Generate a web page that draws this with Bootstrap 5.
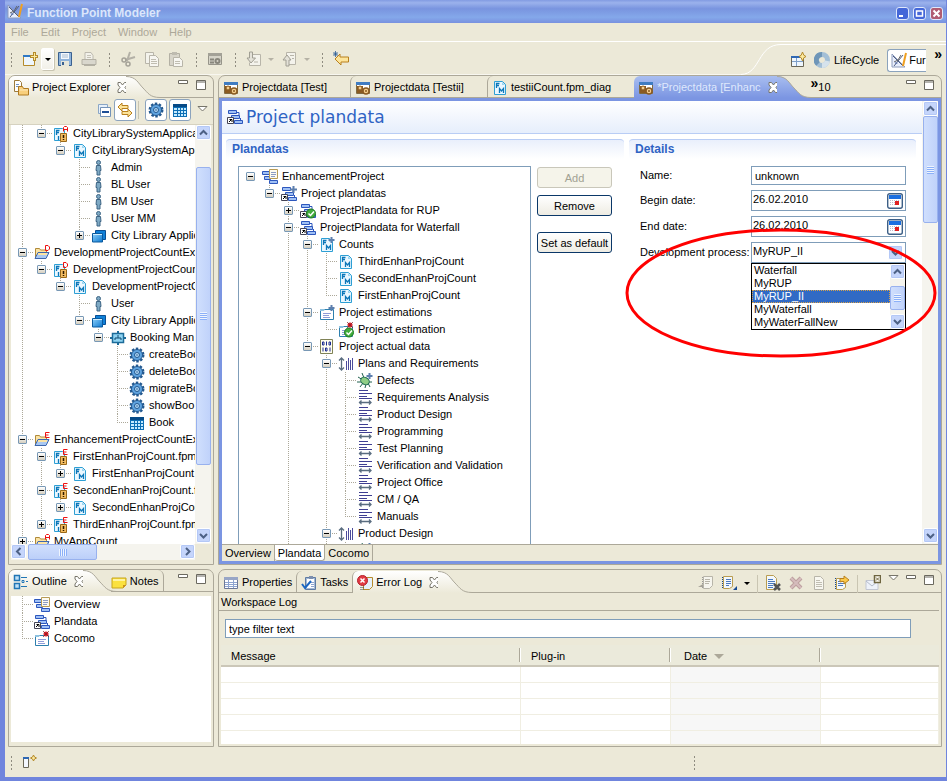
<!DOCTYPE html>
<html lang="en">
<head>
<meta charset="utf-8">
<meta name="viewport" content="width=device-width, initial-scale=1">
<title>Function Point Modeler</title>
<link href="https://cdn.jsdelivr.net/npm/bootstrap@5.3.0/dist/css/bootstrap.min.css" rel="stylesheet">
<style>
:root{--face:#ece9d8;--line:#aca899;--blue:#7b95e2;--field:#7f9db9}
body{font:11px/17px "Liberation Sans",Arial,sans-serif;color:#000;background:var(--face)}
button,input,select{font:inherit;color:inherit}
button{border:0;background:none;padding:0;line-height:17px}
ul{list-style:none;margin:0;padding:0}
svg{display:block;flex:none}
.ic{width:16px;height:16px;overflow:visible}
.shell{height:100vh;border:solid #7085dd;border-width:0 1px 4px 5px;white-space:nowrap}
.titlebar{height:23px;padding:3px 3px 0 2px;background:linear-gradient(#829be2,#9bb2ec 12%,#7994df 38%,#84a8ea 75%,#7991df);color:#dbe6fb;font:bold 12px/21px "Liberation Sans",sans-serif}
.winbtn{width:13px;height:13px;border:1px solid #dfe8fc;border-radius:3px;background:#4467d8}
.winbtn.shut{background:#b05c72}
.menus{height:19px;padding:1px 6px 0;border-bottom:1px solid #fff}
.menus a{color:#aca899;text-decoration:none}
.tools{height:33px}
.strip{gap:8px;padding:2px 0 0 2px}
.grip{width:3px;height:15px;margin:0 1px 0 3px;background:radial-gradient(circle,#8f8c80 1px,transparent 1px) 0 0/3px 4px}
.tri{width:6px;height:16px;margin-left:-2px}
.newgrp{gap:3px;margin-right:-5px}
.newdd{width:13px;height:22px;border:1px solid #fff;border-radius:2px;background:linear-gradient(#fff,#f2f0e8);box-shadow:1px 1px #c9c5b2}
.persp{border-top:1px solid #fff;margin-top:2px;padding:0 4px 0 9px;gap:4px;flex:none}
.persp-on{width:39px;height:23px;border:1px solid #8ba3bd;border-right:0;border-radius:3px 0 0 3px;background:#fff;padding-left:3px;gap:2px}
.rule{border-bottom:1px solid #f8f7f0}
.work{gap:4px;padding:0 4px 0 3px;min-height:0}
.side{flex:0 0 206px;gap:4px;min-height:0;min-width:0}
.main-col{flex:1 1 0;min-width:0}
.pane{border:1px solid var(--line);border-radius:7px 7px 0 0;min-height:0}
.fixedpane{flex:0 0 178px}
.logpane{padding-top:1px}
.tabs{height:22px;flex:none}
.tabs>li{border-bottom:1px solid var(--line);flex:none}
.tabs .on{border-bottom:0;background:linear-gradient(#fff,var(--face));border-radius:6px 0 0 0}
.tabs button{height:21px;display:flex;align-items:center;gap:3px;padding:2px 4px 0}
.tabs .on button{padding-right:0}
.tabs .div{border-left:1px solid var(--line);border-radius:6px 0 0 0}
.tabs .divr{border-right:1px solid var(--line);border-radius:0 6px 0 0;margin-left:-6px}
.ed .on{background:linear-gradient(#a9bef0,var(--blue));color:#dfe8fc}
.ed .doc button{padding-right:23px}
.tabs .curve{width:34px;height:22px;border:0;margin-left:-2px}
.tabs .ctl{gap:7px;padding:4px 6px 0 0;flex:1 1 0}
.more{font-size:14px;line-height:10px}
.viewtools{height:27px;flex:none;gap:2px;padding:0 5px 2px 0;border-bottom:1px solid #d6d2c0}
.tog{width:22px;height:22px;border:1px solid #8ba3bd;border-radius:3px;background:#fff;padding:2px}
.vsep{width:1px;height:18px;background:#c9c5b2}
.white{background:#fff;min-height:0;min-width:0;overflow:hidden}
.inset{margin:0 2px}
/* tree */
.pad7{padding-left:7px}
.tree ul{padding-left:19px}
.tree li{background:repeating-linear-gradient(#aca899 0 1px,transparent 1px 2px) 4px 0/1px 100% no-repeat}
.tree li:last-child{background-size:1px 9px}
.tree.more-below>li:last-child{background-size:1px 100%}
.tree.single>li{background:none}
.tn{height:17px;display:flex;align-items:center;background:repeating-linear-gradient(90deg,#aca899 0 1px,transparent 1px 2px) 6px 8px/9px 1px no-repeat}
.tree.single>li>.tn{background:none}
.tn .ic{margin-right:4px}
.leaf{padding-left:16px}
.tw{width:9px;height:9px;flex:none;margin-right:7px;border:1px solid #7898b5;border-radius:1px;background:linear-gradient(#000,#000) 1px 3px/5px 1px no-repeat,linear-gradient(#fff,#d5cfc0)}
.tw.plus{background:linear-gradient(#000,#000) 1px 3px/5px 1px no-repeat,linear-gradient(#000,#000) 3px 1px/1px 5px no-repeat,linear-gradient(#fff,#d5cfc0)}
/* scroll bars */
.vbar{width:16px;flex:none;background:#f5f4ee;display:flex;flex-direction:column;align-items:stretch;padding:0 0 1px 1px}
.hbar{height:16px;flex:none;background:#f5f4ee;display:flex}
.hcorner{width:16px}
.sb{width:15px;height:15px;flex:none;border:1px solid #fff;border-radius:2px;background:#c5d5fb;box-shadow:0 0 0 1px #b4c8f6 inset;display:flex;align-items:center;justify-content:center}
.vbar .sb{width:auto}
.thumb{border:1px solid #98b1ee;border-radius:2px;background:linear-gradient(90deg,#d0dffd,#c0d2fa);display:flex;align-items:center;justify-content:center}
.hbar .thumb{background:linear-gradient(#d0dffd,#bccff9)}
.thumb i{width:7px;height:8px;background:repeating-linear-gradient(#eef4fe 0 1px,#8cb0f8 1px 2px)}
.hbar .thumb i{width:8px;height:7px;background:repeating-linear-gradient(90deg,#eef4fe 0 1px,#8cb0f8 1px 2px)}
.th-side{margin-top:27px;flex:0 0 298px}
.th-ed{flex:0 0 107px}
.th-h{width:69px;margin-left:2px}
.th-pop{flex:0 0 24px;margin-top:7px}
/* editor */
.frame{border:3px solid var(--blue);min-height:0}
.fhead{height:33px;flex:none;padding:0 5px;background:linear-gradient(#fff,#e6eefc);border-bottom:1px solid #b9cdf5;gap:3px;color:#2f63c4;font:17px/30px "DejaVu Sans",sans-serif}
.secs{padding:5px 6px 0 4px;gap:5px}
.sec-a{flex:398 1 0;min-width:0}
.sec-b{flex:287 1 0;min-width:0}
.stitle{height:20px;margin:0 0 7px;padding:0 6px;border-top:1px solid #b9cdf5;border-radius:4px 4px 0 0;background:linear-gradient(#e9effc,#fff);color:#2f63c4;font:bold 12px/19px "Liberation Sans",sans-serif}
.box{border:1px solid var(--field);border-bottom:0;padding:1px 7px}
.acts{width:75px;flex:none;margin:1px 0 0 6px}
.xpbtn{display:block;width:100%;height:21px;border:1px solid #0a3768;border-radius:3px;background:linear-gradient(#fff,#eeece3);margin-bottom:7px;line-height:18px}
.xpbtn:disabled{border-color:#c9c7ba;background:#f5f4ea;color:#a1a192}
.frow{margin-bottom:5px;padding:0 10px 0 11px}
.frow label{flex:0 0 111px}
.fld{flex:1 1 0;min-width:0;border:1px solid var(--field);background:#fff;height:21px;padding:0 2px 0 1px}
.fld input,.fld select,input.fld{border-radius:0;outline:0}
.fld input,.fld select{border:0;min-width:0;flex:1;padding:0 0 3px;appearance:none;background:#fff;height:19px}
input.fld{height:19px;padding:0 3px}
.pop{left:-1px;right:-1px;top:20px;border:1px solid #000;background:#fff;z-index:3;height:67px}
.pop li{height:13px;line-height:13px;padding-left:2px}
.pop .sel{background:#316ac5;color:#fff;outline:1px dotted #d8a24a;outline-offset:-1px}
.pop .vbar{width:15px;padding:0}
.ring{right:1px;top:126px;width:312px;height:132px;z-index:5;pointer-events:none}
.ptabs{height:17px;flex:none;background:var(--face);border-top:1px solid var(--line)}
.ptabs button{padding:0 3px;height:16px;border-right:1px solid var(--line);line-height:16px}
.ptabs .cur{background:#fff;border:solid var(--line);border-width:0 1px 1px 0;border-radius:0 0 3px 3px}
/* log */
.wslog{border-bottom:1px solid var(--line);margin-right:2px;padding:1px 0 0 2px;height:18px}
.filter{flex:none;margin:8px 30px 0 6px}
.log{margin:7px 2px 2px 2px}
.logt{width:100%;table-layout:fixed;border-collapse:separate;border-spacing:0}
.logt th{font-weight:400;height:22px;padding:2px 0 0 10px;background:linear-gradient(90deg,var(--line) 1px,#fff 1px) right 3px/2px 14px no-repeat #ebeadb;background-position:right 3px;border-bottom:2px solid #cbc7b8}
.logt th:last-child{background-image:none}
.logt th:nth-child(3){padding-left:13px}
.logt td{height:16px;padding:0;border-bottom:1px solid #f0eee2;border-right:1px solid #f0eee2;background:#fff}
.logt td:nth-child(3){background:#f7f7f7}
.w300{width:300px}
.w150{width:150px}
.status{height:30px;padding-left:2px}
.status .far{margin-left:647px}
</style>
</head>
<body>
<svg width="0" height="0" class="position-absolute" aria-hidden="true">
<defs>
<linearGradient id="gw" x2="0" y2="1"><stop stop-color="#fff"/><stop offset="1" stop-color="#ece9d8"/></linearGradient>
<linearGradient id="gb" x2="0" y2="1"><stop stop-color="#a9bef0"/><stop offset="1" stop-color="#7b95e2"/></linearGradient>
<linearGradient id="gp" x2="1" y2="1"><stop stop-color="#8fd0fa"/><stop offset="1" stop-color="#0a78d0"/></linearGradient>
<symbol id="app" viewBox="0 0 16 16"><path d="M1 2V15H14Z" fill="#e8eefc" stroke="#8d9cbd"/><path d="M4 9v3h3z" fill="#8fa6dd"/><path d="M2 4l10 10M3 14L12 3" stroke="#4f5d80"/><path d="M15 1l-3 13" stroke="#f0a020" stroke-width="2"/><path d="M3 10l4-2 3-5" stroke="#666" fill="none"/></symbol>
<symbol id="new" viewBox="0 0 16 16"><path d="M1.500 4.500h11v10h-11z" fill="#eef6fd" stroke="#b58a2a"/><path d="M1 4h9v2H1z" fill="#2f78c4"/><path d="M12.500 1v9M8 5.500h8" stroke="#b58a2a" stroke-width="3"/><path d="M12.500 2v7M9 5.500h6" stroke="#fbe9a0"/></symbol>
<symbol id="save" viewBox="0 0 16 16"><path d="M1.500 1.500h13v13h-13z" fill="#8fb3da" stroke="#3a6190"/><path d="M4 2h8v6H4z" fill="#f4f8fc"/><path d="M5 4h6M5 6h6" stroke="#a8bdd2"/><path d="M4 10h8v5H4z" fill="#e6e6da"/><path d="M5 11h2v3H5z" fill="#3a6190"/></symbol>
<symbol id="print" viewBox="0 0 16 16"><path d="M4 1.500h6l2 3v5H4z" fill="#f2f1ea" stroke="#bcb9ae"/><path d="M1 8.500h14v5H1z" fill="#d9d7cd" stroke="#b3b0a4"/><path d="M3 14.500h11" stroke="#b3b0a4"/><path d="M6 4.500h4M6 6.500h4" stroke="#c5c2b6"/></symbol>
<symbol id="cut" viewBox="0 0 16 16"><path d="M10 1L7 10M15 6L5 9" stroke="#b3b0a6" stroke-width="2"/><circle cx="4" cy="9" r="2" fill="none" stroke="#a5a298" stroke-width="1.500"/><circle cx="8" cy="13" r="2" fill="none" stroke="#a5a298" stroke-width="1.500"/></symbol>
<symbol id="copy" viewBox="0 0 16 16"><path d="M1.500 1.500h8v11h-8z" fill="#f4f3ec" stroke="#b8b5a9"/><path d="M5.500 4.500h6l3 3v8h-9z" fill="#f7f6f1" stroke="#b8b5a9"/><path d="M7 8.500h5M7 10.500h6M7 12.500h6" stroke="#c0bdb1"/></symbol>
<symbol id="paste" viewBox="0 0 16 16"><path d="M1.500 2.500h10v12h-10z" fill="#d8d5ca" stroke="#b3b0a4"/><path d="M4 1h5v3H4z" fill="#bebbb0"/><path d="M5.500 6.500h6l3 3v6h-9z" fill="#f7f6f1" stroke="#b8b5a9"/><path d="M7 10.500h5M7 12.500h5" stroke="#c0bdb1"/></symbol>
<symbol id="pd" viewBox="0 0 16 16"><path d="M1.500 2.500h13v11h-13z" fill="#fff" stroke="#7f6b42"/><path d="M1 2h14v3H1z" fill="#3f7cc2"/><path d="M2 6h6v7H2z" fill="#8a5a22"/><circle cx="5" cy="8" r="2" fill="#f5cf8d" stroke="#8a5a22"/><circle cx="11" cy="11" r="3" fill="#f5cf8d" stroke="#8a5a22" stroke-width="1.500"/><circle cx="11" cy="11" r="1" fill="#8a5a22"/></symbol>
<symbol id="pdg" viewBox="0 0 16 16"><path d="M1.500 2.500h13v11h-13z" fill="#d5d3c8" stroke="#97958a"/><path d="M1 2h14v3H1z" fill="#a3a197"/><path d="M3 8.500h4M3 11.500h4" stroke="#88867c" stroke-width="2"/><circle cx="10.500" cy="10" r="2" fill="none" stroke="#88867c" stroke-width="2"/></symbol>
<symbol id="imp" viewBox="0 0 16 16"><path d="M6.500 3.500h8v11h-11v-3" fill="#f4f3ec" stroke="#b8b5a9"/><path d="M3.500 1h3v6h3l-4.500 5L1 7h2.500z" fill="#e4e2d8" stroke="#a09e93"/><path d="M8 11h4" stroke="#b8b5a9"/></symbol>
<symbol id="exp" viewBox="0 0 16 16"><path d="M4.500 1.500h9v12h-9z" fill="#f4f3ec" stroke="#b8b5a9"/><path d="M4 15V9H1l4-5 4 5H7v6z" fill="#e4e2d8" stroke="#a09e93"/><path d="M8 4.500h4M10 7.500h2" stroke="#b8b5a9"/></symbol>
<symbol id="back" viewBox="0 0 16 16"><path d="M2 8l5-5v3h8.500v5H8v3z" fill="#fde49a" stroke="#b8801e"/><path d="M2.500 0v6M0 3h5M.5 1l4 4M4.500 1l-4 4" stroke="#2b5a95" stroke-width=".8"/></symbol>
<symbol id="opp" viewBox="0 0 16 16"><path d="M1.500 4.500h12v10h-12z" fill="#eef6fd" stroke="#6b6757"/><path d="M1 4h9v2H1z" fill="#2f68b4"/><path d="M6.500 6v8M2 9.500h11" stroke="#7e9fc8"/><path d="M12.500 0l1.300 3.200L16 4.500l-2.200 1.300L12.500 9l-1.300-3.200L9 4.500l2.200-1.300z" fill="#fbe9a0" stroke="#b58a2a"/></symbol>
<symbol id="life" viewBox="0 0 16 16"><circle cx="8" cy="8" r="5.500" fill="none" stroke="#a3bfd6" stroke-width="5"/><path d="M8 2.500A5.500 5.500 0 0 0 4 12" fill="none" stroke="#6f96b8" stroke-width="5"/><path d="M8 13.500A5.500 5.500 0 0 0 13.500 9" fill="none" stroke="#d5e2ec" stroke-width="5"/></symbol>
<symbol id="pex" viewBox="0 0 16 16"><path d="M1.500.5h5l2 2v9h-7z" fill="#fff" stroke="#9d7a3a"/><path d="M3 4.500h3M3 6.500h3" stroke="#6f93c4"/><path d="M5.500 15V6.500h4l1 2h5V15z" fill="#f8cf7c" stroke="#b07a20"/><path d="M7 10h8" stroke="#fdeabb"/></symbol>
<symbol id="coll" viewBox="0 0 16 16"><path d="M2.500 2.500h9v9h-9z" fill="#e7f0fa" stroke="#8aa6c6"/><path d="M4.500 5.500h10v9h-10z" fill="#fff" stroke="#7392b8"/><path d="M6 10h7" stroke="#1f4f96" stroke-width="2"/></symbol>
<symbol id="link" viewBox="0 0 16 16"><path d="M1 5l4-4v2.500h6v3H5V9z" fill="#fde49a" stroke="#b8801e"/><path d="M15 11l-4-4v2.500H5v3h6V15z" fill="#fde49a" stroke="#b8801e"/></symbol>
<symbol id="gear" viewBox="0 0 16 16"><circle cx="8" cy="8" r="6.200" fill="none" stroke="#22588f" stroke-width="2.500" stroke-dasharray="2.400 1.500"/><circle cx="8" cy="8" r="5.500" fill="#5fa3df" stroke="#22588f"/><circle cx="8" cy="8" r="2.500" fill="#b5dbf8" stroke="#22588f"/><circle cx="8" cy="8" r=".8" fill="#22588f"/></symbol>
<symbol id="grid" viewBox="0 0 16 16"><path d="M1 2h14v13H1z" fill="#0d6fb5"/><path d="M1 2h14v3H1z" fill="#064a86"/><path d="M2 6h3v2H2zM6 6h2v2H6zM9 6h2v2H9zM12 6h2v2h-2zM2 9h3v2H2zM6 9h2v2H6zM9 9h2v2H9zM12 9h2v2h-2zM2 12h3v2H2zM6 12h2v2H6zM9 12h2v2H9zM12 12h2v2h-2z" fill="#c5ebff"/></symbol>
<symbol id="fm" viewBox="0 0 16 16"><path d="M2.500 1.500h8l3 3v10h-11z" fill="#eaf7ff" stroke="#2d9fd4"/><path d="M10 2v3h3" fill="#9bd6f2"/><path d="M4.500 8V3.500h3M4.500 5.500h2.500M7.500 13V8.500l2 2.500 2-2.500V13" fill="none" stroke="#0b76b8" stroke-width="1.300"/></symbol>
<symbol id="fml" viewBox="0 0 16 16"><path d="M1.500 2.500h8l2 2v10h-10z" fill="#eaf7ff" stroke="#2d9fd4"/><path d="M3.500 9V4.500h3M3.500 6.500h2.500M5.500 14V10" fill="none" stroke="#0b76b8" stroke-width="1.300"/><path d="M7.500 7.500h6v8h-6z" fill="#f3bd63" stroke="#9a6a1a"/><path d="M10.500 9v3M10.500 13v1" stroke="#2b1a00" stroke-width="1.500"/></symbol>
<symbol id="lA" viewBox="0 0 5 6"><path d="M.5 5.500v-4l1-1h2l1 1v4M.5 3.500h4" fill="none" stroke="#e11"/></symbol>
<symbol id="lD" viewBox="0 0 5 6"><path d="M.5.500h2.500l1.500 1.500v2L3 5.500H.5z" fill="none" stroke="#e11"/></symbol>
<symbol id="lE" viewBox="0 0 5 6"><path d="M4.500.5h-4v5h4M.5 3h3" fill="none" stroke="#e11"/></symbol>
<symbol id="fmA" viewBox="0 0 16 16"><use href="#fml" width="16" height="16"/><use href="#lA" x="10" width="5" height="6"/></symbol>
<symbol id="fmD" viewBox="0 0 16 16"><use href="#fml" width="16" height="16"/><use href="#lD" x="10" width="5" height="6"/></symbol>
<symbol id="fmE" viewBox="0 0 16 16"><use href="#fml" width="16" height="16"/><use href="#lE" x="10" width="5" height="6"/></symbol>
<symbol id="fold" viewBox="0 0 16 16"><path d="M1.500 13V3.500h4l1 1.500h6v3" fill="#fbe3a4" stroke="#b08a3a"/><path d="M1 13.500l3-6h11l-3 6z" fill="#a9c8f2" stroke="#3e67ad"/><path d="M4 9h9" stroke="#fbe3a4" stroke-width="2"/></symbol>
<symbol id="foD" viewBox="0 0 16 16"><use href="#fold" width="16" height="16"/><use href="#lD" x="11" width="5" height="6"/></symbol>
<symbol id="foE" viewBox="0 0 16 16"><use href="#fold" width="16" height="16"/><use href="#lE" x="11" width="5" height="6"/></symbol>
<symbol id="foA" viewBox="0 0 16 16"><use href="#fold" width="16" height="16"/><use href="#lA" x="11" width="5" height="6"/></symbol>
<symbol id="man" viewBox="0 0 16 16"><circle cx="7.500" cy="2.500" r="2" fill="#7ea9c4" stroke="#3c6484"/><path d="M5.500 5.500h4l.5 5H9V15H6v-4.500H5z" fill="#7ea9c4" stroke="#3c6484"/></symbol>
<symbol id="pkg" viewBox="0 0 16 16"><path d="M4.500 2.500h10v9h-10z" fill="#0f80d8" stroke="#0a4f93"/><path d="M1.500 5.500h10v8.500h-10z" fill="url(#gp)" stroke="#0a5a9f"/><path d="M2 6.500h9" stroke="#cfeeff"/></symbol>
<symbol id="node" viewBox="0 0 16 16"><path d="M8 1v14M0 8h16" stroke="#1d6b99" stroke-width="2"/><path d="M2.500 3.500h11v9h-11z" fill="#8fd4f3" stroke="#1d6b99" stroke-width="1.500"/><path d="M8 5v3M5 10V8h6v2" fill="none" stroke="#114b70"/></symbol>
<symbol id="bars" viewBox="0 0 16 16"><path d="M1.500 1.500h8v3h-8zM4.500 6.500h8v3h-8zM7.500 11.500h8v3h-8z" fill="#9fc0f5" stroke="#2d57bd"/><path d="M10 3.500h2v3M13.500 9v2" stroke="#2d57bd" fill="none"/></symbol>
<symbol id="plan" viewBox="0 0 16 16"><use href="#bars" width="16" height="16"/><path d="M.5 8.500h6v6h-6z" fill="#fff" stroke="#445"/><path d="M2 13L5 10M2.500 10.500H5V13" stroke="#000" fill="none"/></symbol>
<symbol id="planp" viewBox="0 0 16 16"><use href="#plan" width="16" height="16"/><path d="M12.500 0v7M9 3.500h7" stroke="#5d7fae" stroke-width="2"/></symbol>
<symbol id="ok" viewBox="0 0 16 16"><circle cx="11" cy="10.500" r="4.500" fill="#43ad3d" stroke="#1d7a22"/><path d="M8.500 10.500l2 2 3.500-4" stroke="#fff" stroke-width="1.500" fill="none"/></symbol>
<symbol id="planok" viewBox="0 0 16 16"><use href="#plan" width="16" height="16"/><use href="#ok" width="16" height="16"/></symbol>
<symbol id="over" viewBox="0 0 16 16"><path d="M.5 2.500h7v3h-7zM2.500 7.500h6v3h-6zM7.500 11.500h8v3h-8z" fill="#9fc0f5" stroke="#2d57bd"/><path d="M7.500.5h8v9h-8z" fill="#fdfaf0" stroke="#b79b55"/><path d="M9 3.500h5M9 5.500h5M9 7.500h4" stroke="#8b9cc4"/></symbol>
<symbol id="fmp" viewBox="0 0 16 16"><use href="#fm" width="16" height="16"/><path d="M12.500 0v6M9.500 3h6" stroke="#5d7fae" stroke-width="2"/></symbol>
<symbol id="est" viewBox="0 0 16 16"><path d="M1.500 4.500h13v10h-13z" fill="#fff" stroke="#2d7fae"/><path d="M1 4h5l-1 2H1z" fill="#8ec2e0"/><path d="M4 8.500h8M4 10.500h6M4 12.500h7" stroke="#8f9cd8"/></symbol>
<symbol id="estp" viewBox="0 0 16 16"><use href="#est" width="16" height="16"/><path d="M12.500 0v6M9.500 3h6" stroke="#5d7fae" stroke-width="2"/></symbol>
<symbol id="estr" viewBox="0 0 16 16"><use href="#est" width="16" height="16"/><circle cx="12" cy="3" r="2.500" fill="#dd2030"/><path d="M9 0l6 6M15 0L9 6" stroke="#7a2020" stroke-width=".7"/></symbol>
<symbol id="estok" viewBox="0 0 16 16"><use href="#estr" width="16" height="16"/><use href="#ok" width="16" height="16"/></symbol>
<symbol id="bin" viewBox="0 0 16 16"><path d="M1.500.5h12v14h-12z" fill="#fffef0" stroke="#7f8256"/><path d="M3.500 3h1.500v3H3.500zM10 3h1.500v3H10zM6.500 9h1.500v3H6.500zM7.500 2.500v4M4 8.500v4M11 8.500v4" fill="none" stroke="#1a2a90"/></symbol>
<symbol id="upd" viewBox="0 0 16 16"><path d="M3.500 2v12M1 4.500L3.500 2 6 4.500M1 11.500L3.500 14 6 11.500" stroke="#5a6d80" fill="none" stroke-width="1.300"/><path d="M8.500 5v9M10.500 2v12M12.500 4v10M14.500 2v12" stroke="#4b4b9b"/></symbol>
<symbol id="bug" viewBox="0 0 16 16"><path d="M1 4l5 3M5 0l2 5M0 9h5M3 14l3-4M8 15l1-4M13 14l-2-4M15 9h-3" stroke="#20604e"/><ellipse cx="8" cy="8" rx="4.500" ry="3.500" transform="rotate(30 8 8)" fill="#8fce86" stroke="#1f6a52"/><path d="M12.500 0v6M9.500 3h6" stroke="#5d7fae" stroke-width="2"/></symbol>
<symbol id="lines" viewBox="0 0 16 16"><path d="M2 .5h9M2 3.500h13M2 6.500h8M2 8.500h13" stroke="#3f3f92"/><path d="M2 12.500h12M4.500 10.500l-2 2 2 2M12 10.500l2 2-2 2" stroke="#5a6d80" fill="none" stroke-width="1.300"/></symbol>
<symbol id="outl" viewBox="0 0 16 16"><path d="M1.500 1.500h5v5h-5zM1.500 9.500h5v5h-5z" fill="#bfe1f8" stroke="#2176b5" stroke-width="1.500"/><path d="M8 3.500h6M8 12.500h6M13 7.500h2" stroke="#2176b5"/><path d="M9 6.500h2v2H9z" fill="#fff" stroke="#2176b5"/></symbol>
<symbol id="note" viewBox="0 0 16 16"><path d="M1 4h14v7l-3 3H1z" fill="#fbe13e" stroke="#c7a51e"/><path d="M15 11h-3v3z" fill="#c98e1e"/><path d="M2 5h12v2H2z" fill="#fff3a0"/></symbol>
<symbol id="prop" viewBox="0 0 16 16"><path d="M1.500 2.500h13v11h-13z" fill="#fff" stroke="#6d7896"/><path d="M1 2h14v3H1z" fill="#98a6c6"/><path d="M2 7.500h12M2 9.500h12M2 11.500h12M5.500 5v8M10.500 5v8" stroke="#8fa5d0"/></symbol>
<symbol id="task" viewBox="0 0 16 16"><path d="M4.500 2.500h10v12h-10z" fill="#a4bad6" stroke="#5e7ba3"/><path d="M6 4h7v9H6z" fill="#fff"/><path d="M8 1h4v3H8z" fill="#7c8fae"/><path d="M10 7.500h3M10 9.500h3M10 11.500h3" stroke="#8fa5d0"/><path d="M1 9l3 4 6-7" stroke="#1a66c2" stroke-width="2" fill="none"/></symbol>
<symbol id="err" viewBox="0 0 16 16"><path d="M6.500 2.500h9v9l-3 3h-6z" fill="#e5f1fb" stroke="#b58a2a"/><circle cx="5.500" cy="5.500" r="5" fill="#e23b44" stroke="#b3202c"/><path d="M3.500 3.500l4 4M7.500 3.500l-4 4" stroke="#fff" stroke-width="1.500"/><path d="M4 12v3M6 12v3" stroke="#345" stroke-dasharray="1 1"/></symbol>
<symbol id="lg1" viewBox="0 0 16 16"><path d="M5.500 1.500h9v9l-3 3h-6z" fill="#f6f5ee" stroke="#b8b5a9"/><path d="M4.500 2v11" stroke="#999" stroke-dasharray="1 1"/><path d="M7 4.500h5M7 6.500h5M7 8.500h4" stroke="#b8b5a9"/><path d="M0 12h5v-3z" fill="#a5a298"/></symbol>
<symbol id="lg2" viewBox="0 0 16 16"><path d="M2.500 1.500h9v10l-3 2h-6z" fill="#f3f8fd" stroke="#b99d50"/><path d="M1.500 2v11" stroke="#174a92" stroke-dasharray="1 1"/><path d="M5 4.500h5M5 6.500h5M5 8.500h5M5 10.500h3" stroke="#4b79bd"/><path d="M16 11v4h-4z" fill="#174a92"/></symbol>
<symbol id="lg3" viewBox="0 0 16 16"><path d="M1.500.5h7l3 3v11h-10z" fill="#f3f8fd" stroke="#b99d50"/><path d="M3 4.500h5M3 6.500h7M3 8.500h7M3 10.500h5M3 12.500h5" stroke="#4b79bd"/><path d="M9 9l6 6M15 9l-6 6" stroke="#555" stroke-width="2.500"/></symbol>
<symbol id="lg4" viewBox="0 0 16 16"><path d="M3 3l10 10M13 3L3 13" stroke="#bd9f9f" stroke-width="4"/><path d="M3 3l10 10M13 3L3 13" stroke="#d5bcbc" stroke-width="2"/></symbol>
<symbol id="lg5" viewBox="0 0 16 16"><path d="M3.500 1.500h6l3 3v10h-9z" fill="#f8f7f0" stroke="#b8b5a9"/><path d="M5 5.500h4M5 7.500h6M5 9.500h6M5 11.500h6" stroke="#c0bdb1"/></symbol>
<symbol id="lg6" viewBox="0 0 16 16"><path d="M2.500 3.500h9v9l-3 2h-6z" fill="#f3f8fd" stroke="#b99d50"/><path d="M1.500 3v11" stroke="#174a92" stroke-dasharray="1 1"/><path d="M4 6.500h4M4 8.500h6M4 10.500h5" stroke="#4b79bd"/><path d="M6 7V3.500h4V1l5 4-5 4V6.500H8z" fill="#fbc94a" stroke="#b8801e"/></symbol>
<symbol id="lg7" viewBox="0 0 16 16"><path d="M1 5.500h12v9H1z" fill="#eef2fa" stroke="#c2c6d2"/><path d="M1 6l6 5 6-5" stroke="#b5bccb" fill="none"/><path d="M9.500.5h6v7h-6z" fill="#fdfaf0" stroke="#6e6540" stroke-width="1.500"/><path d="M11 2.500l3 3M14 2.500l-3 3" stroke="#6e6540"/></symbol>
<symbol id="cal" viewBox="0 0 16 16"><rect x=".7" y=".7" width="14.600" height="14.600" rx="2" fill="#fff" stroke="#3d5f86" stroke-width="1.400"/><path d="M2 2h12v4H2z" fill="#1b6fe0"/><path d="M3 7.500h10M3 9.500h10M3 11.500h10" stroke="#bbc" stroke-dasharray="1 1"/><path d="M8 8h4v4H8z" fill="#e02020"/></symbol>
<symbol id="fast" viewBox="0 0 16 16"><path d="M1.500 3.500h5v10h-5z" fill="#f4f8ff" stroke="#6b6757"/><path d="M1 3h6v2H1z" fill="#2f68b4"/><path d="M11.500 1l1 2 2 1-2 1-1 2-1-2-2-1 2-1z" fill="#fbe9a0" stroke="#b58a2a"/></symbol>
<symbol id="x" viewBox="0 0 11 11"><path d="M1 .5h2.500l2 2.500 2-2.500H10v2.500L8 5.500l2 2.500v2.500H7.500l-2-2.500-2 2.500H1V8l2-2.500L1 3z" fill="#fff" stroke="#77756a"/></symbol>
<symbol id="min" viewBox="0 0 11 11"><path d="M.5.5h9v3h-9z" fill="#fff" stroke="#6b695f"/></symbol>
<symbol id="max" viewBox="0 0 11 11"><path d="M.5.5h9v9h-9zM1 2h9" fill="#fff" stroke="#6b695f"/></symbol>
<symbol id="vm" viewBox="0 0 11 11"><path d="M1 .5h9L5.500 5z" fill="#fff" stroke="#77756a"/></symbol>
<symbol id="dn" viewBox="0 0 6 16"><path d="M0 7h6L3 10z"/></symbol>
<symbol id="cu" viewBox="0 0 9 9"><path d="M1 6.500L4.500 3 8 6.500" fill="none" stroke="#4d6185" stroke-width="2"/></symbol>
<symbol id="cd" viewBox="0 0 9 9"><path d="M1 3L4.500 6.500 8 3" fill="none" stroke="#4d6185" stroke-width="2"/></symbol>
<symbol id="cl" viewBox="0 0 9 9"><path d="M6.500 1L3 4.500 6.500 8" fill="none" stroke="#4d6185" stroke-width="2"/></symbol>
<symbol id="cr" viewBox="0 0 9 9"><path d="M3 1l3.500 3.500L3 8" fill="none" stroke="#4d6185" stroke-width="2"/></symbol>
</defs>
</svg>

<div class="shell d-flex flex-column overflow-hidden">
<header class="titlebar d-flex gap-1 flex-shrink-0">
<svg class="ic"><use href="#app"/></svg><span class="flex-grow-1">Function Point Modeler</span>
<div class="d-flex gap-1 pt-1">
<button class="winbtn" aria-label="Minimize"><svg width="11" height="11"><path d="M2 8h4" stroke="#fff" stroke-width="2"/></svg></button>
<button class="winbtn" aria-label="Maximize"><svg width="11" height="11"><path d="M2.500 3h6v5h-6z" fill="none" stroke="#fff" stroke-width="1.500"/></svg></button>
<button class="winbtn shut" aria-label="Close"><svg width="11" height="11"><path d="M2.500 2.500l6 6M8.500 2.500l-6 6" stroke="#fff" stroke-width="2"/></svg></button>
</div>
</header>
<nav class="menus d-flex flex-shrink-0"><a class="me-2 pe-1" href="#">File</a><a class="me-2 pe-1" href="#">Edit</a><a class="me-2 pe-1" href="#">Project</a><a class="me-2 pe-1" href="#">Window</a><a href="#">Help</a></nav>
<div class="tools d-flex flex-shrink-0">
<div class="strip rule flex-grow-1 d-flex align-items-center" role="toolbar">
<i class="grip"></i><div class="newgrp d-flex align-items-center"><button aria-label="New"><svg class="ic"><use href="#new"/></svg></button><button class="newdd d-flex align-items-center justify-content-center" aria-label="New menu"><svg width="6" height="16"><use href="#dn"/></svg></button></div>
<button aria-label="Save"><svg class="ic"><use href="#save"/></svg></button><button aria-label="Print"><svg class="ic"><use href="#print"/></svg></button>
<i class="grip"></i><button aria-label="Cut"><svg class="ic"><use href="#cut"/></svg></button><button aria-label="Copy"><svg class="ic"><use href="#copy"/></svg></button><button aria-label="Paste"><svg class="ic"><use href="#paste"/></svg></button>
<i class="grip"></i><button aria-label="Data"><svg class="ic"><use href="#pdg"/></svg></button>
<i class="grip"></i><button aria-label="Import"><svg class="ic"><use href="#imp"/></svg></button><svg class="tri" fill="#b5b2a5"><use href="#dn"/></svg><button aria-label="Export"><svg class="ic"><use href="#exp"/></svg></button><svg class="tri" fill="#b5b2a5"><use href="#dn"/></svg>
<i class="grip"></i><button aria-label="Last edit"><svg class="ic"><use href="#back"/></svg></button>
</div>
<svg width="40" height="33"><path d="M0 32.500C20 32 16 2.500 40 2.500" fill="none" stroke="#fff"/></svg>
<div class="persp d-flex align-items-center">
<button aria-label="Open perspective"><svg class="ic"><use href="#opp"/></svg></button><button class="d-flex align-items-center ms-1 me-1 gap-1"><svg class="ic"><use href="#life"/></svg>LifeCycle</button>
<button class="persp-on d-flex align-items-center"><svg class="ic"><use href="#app"/></svg>Fur</button><b class="align-self-start ps-1 pt-1 more">»</b>
</div>
</div>

<main class="work d-flex flex-grow-1">
<div class="side d-flex flex-column">
<section class="pane d-flex flex-column flex-grow-1">
<ul class="tabs d-flex"><li class="on"><button><svg class="ic"><use href="#pex"/></svg>Project Explorer<svg class="ms-1" width="11" height="11"><use href="#x"/></svg></button></li><li class="curve"><svg width="34" height="22"><path d="M0 0C10 0 12 7 17 12S24 21.500 34 21.500V22H0z" fill="url(#gw)"/><path d="M0 .5C10 .5 12 7 17 12S24 21.500 34 21.500" fill="none" stroke="#aca899"/></svg></li><li class="ctl d-flex justify-content-end"><svg width="11" height="11"><use href="#min"/></svg><svg width="11" height="11"><use href="#max"/></svg></li></ul>
<div class="viewtools d-flex align-items-center justify-content-end"><svg class="ic"><use href="#coll"/></svg><button class="tog" aria-label="Link"><svg class="ic"><use href="#link"/></svg></button><i class="vsep"></i><button class="tog ms-1" aria-label="Operations"><svg class="ic"><use href="#gear"/></svg></button><button class="tog" aria-label="Tables"><svg class="ic"><use href="#grid"/></svg></button><svg class="ms-1 align-self-start mt-2" width="11" height="11"><use href="#vm"/></svg></div>
<div class="d-flex flex-grow-1 white inset">
<ul class="tree more-below flex-grow-1 white pad7">
<li><ul><li><div class="tn"><button class="tw" aria-label="Collapse"></button><svg class="ic"><use href="#fmA"/></svg>CityLibrarySystemApplicat</div>
<ul><li><div class="tn"><button class="tw" aria-label="Collapse"></button><svg class="ic"><use href="#fm"/></svg>CityLibrarySystemApp</div>
<ul><li><div class="tn leaf"><svg class="ic"><use href="#man"/></svg>Admin</div></li><li><div class="tn leaf"><svg class="ic"><use href="#man"/></svg>BL User</div></li><li><div class="tn leaf"><svg class="ic"><use href="#man"/></svg>BM User</div></li><li><div class="tn leaf"><svg class="ic"><use href="#man"/></svg>User MM</div></li><li><div class="tn"><button class="tw plus" aria-label="Expand"></button><svg class="ic"><use href="#pkg"/></svg>City Library Applic</div></li></ul></li></ul></li></ul></li>
<li><div class="tn"><button class="tw" aria-label="Collapse"></button><svg class="ic"><use href="#foD"/></svg>DevelopmentProjectCountExa</div>
<ul><li><div class="tn"><button class="tw" aria-label="Collapse"></button><svg class="ic"><use href="#fmD"/></svg>DevelopmentProjectCoun</div>
<ul><li><div class="tn"><button class="tw" aria-label="Collapse"></button><svg class="ic"><use href="#fm"/></svg>DevelopmentProjectC</div>
<ul><li><div class="tn leaf"><svg class="ic"><use href="#man"/></svg>User</div></li><li><div class="tn"><button class="tw" aria-label="Collapse"></button><svg class="ic"><use href="#pkg"/></svg>City Library Applic</div>
<ul><li><div class="tn"><button class="tw" aria-label="Collapse"></button><svg class="ic"><use href="#node"/></svg>Booking Man</div>
<ul><li><div class="tn leaf"><svg class="ic"><use href="#gear"/></svg>createBoo</div></li><li><div class="tn leaf"><svg class="ic"><use href="#gear"/></svg>deleteBoo</div></li><li><div class="tn leaf"><svg class="ic"><use href="#gear"/></svg>migrateBo</div></li><li><div class="tn leaf"><svg class="ic"><use href="#gear"/></svg>showBoo</div></li><li><div class="tn leaf"><svg class="ic"><use href="#grid"/></svg>Book</div></li></ul></li></ul></li></ul></li></ul></li></ul></li>
<li><div class="tn"><button class="tw" aria-label="Collapse"></button><svg class="ic"><use href="#foE"/></svg>EnhancementProjectCountEx</div>
<ul><li><div class="tn"><button class="tw" aria-label="Collapse"></button><svg class="ic"><use href="#fmE"/></svg>FirstEnhanProjCount.fpm_</div><ul><li><div class="tn"><button class="tw plus" aria-label="Expand"></button><svg class="ic"><use href="#fm"/></svg>FirstEnhanProjCount</div></li></ul></li>
<li><div class="tn"><button class="tw" aria-label="Collapse"></button><svg class="ic"><use href="#fmE"/></svg>SecondEnhanProjCount.f</div><ul><li><div class="tn"><button class="tw plus" aria-label="Expand"></button><svg class="ic"><use href="#fm"/></svg>SecondEnhanProjCou</div></li></ul></li>
<li><div class="tn"><button class="tw plus" aria-label="Expand"></button><svg class="ic"><use href="#fmE"/></svg>ThirdEnhanProjCount.fpm</div></li></ul></li>
<li><div class="tn"><button class="tw plus" aria-label="Expand"></button><svg class="ic"><use href="#foA"/></svg>MyAppCount</div></li>
</ul>
<div class="vbar"><button class="sb" aria-label="Scroll up"><svg width="9" height="9"><use href="#cu"/></svg></button><div class="thumb th-side"><i></i></div><button class="sb mt-auto" aria-label="Scroll down"><svg width="9" height="9"><use href="#cd"/></svg></button></div>
</div>
<div class="d-flex inset mb-1"><div class="hbar flex-grow-1"><button class="sb" aria-label="Scroll left"><svg width="9" height="9"><use href="#cl"/></svg></button><div class="thumb th-h"><i></i></div><button class="sb ms-auto" aria-label="Scroll right"><svg width="9" height="9"><use href="#cr"/></svg></button></div><span class="hcorner"></span></div>
</section>
<section class="pane fixedpane d-flex flex-column">
<ul class="tabs d-flex"><li class="on"><button><svg class="ic"><use href="#outl"/></svg>Outline<svg class="ms-1" width="11" height="11"><use href="#x"/></svg></button></li><li class="curve"><svg width="34" height="22"><path d="M0 0C10 0 12 7 17 12S24 21.500 34 21.500V22H0z" fill="url(#gw)"/><path d="M0 .5C10 .5 12 7 17 12S24 21.500 34 21.500" fill="none" stroke="#aca899"/></svg></li><li class="divr"><button class="ps-0 pe-1"><svg class="ic"><use href="#note"/></svg>Notes</button></li><li class="ctl d-flex justify-content-end"><svg width="11" height="11"><use href="#min"/></svg><svg width="11" height="11"><use href="#max"/></svg></li></ul>
<div class="d-flex flex-grow-1 white inset mt-1 mb-1"><ul class="tree pad7">
<li><div class="tn leaf"><svg class="ic"><use href="#over"/></svg>Overview</div></li><li><div class="tn leaf"><svg class="ic"><use href="#plan"/></svg>Plandata</div></li><li><div class="tn leaf"><svg class="ic"><use href="#estr"/></svg>Cocomo</div></li>
</ul></div>
</section>
</div>

<div class="main-col d-flex flex-column gap-1">
<section class="pane ed d-flex flex-column flex-grow-1">
<ul class="tabs d-flex"><li class="doc"><button><svg class="ic"><use href="#pd"/></svg>Projectdata [Test]</button></li><li class="div doc"><button><svg class="ic"><use href="#pd"/></svg>Projectdata [Testii]</button></li><li class="div doc"><button><svg class="ic"><use href="#fm"/></svg>testiiCount.fpm_diag</button></li><li class="on"><button><svg class="ic"><use href="#pd"/></svg>*Projectdata [Enhanc<svg class="ms-1" width="11" height="11"><use href="#x"/></svg></button></li><li class="curve"><svg width="34" height="22"><path d="M0 0C10 0 12 7 17 12S24 21.500 34 21.500V22H0z" fill="url(#gb)"/><path d="M0 .5C10 .5 12 7 17 12S24 21.500 34 21.500" fill="none" stroke="#aca899"/></svg></li><li><button class="ps-0 gap-0"><b class="align-self-start more">»</b>10</button></li><li class="ctl d-flex justify-content-end"><svg width="11" height="11"><use href="#min"/></svg><svg width="11" height="11"><use href="#max"/></svg></li></ul>
<div class="frame d-flex flex-column flex-grow-1 position-relative">
<div class="d-flex flex-grow-1 white">
<div class="flex-grow-1 d-flex flex-column white">
<h1 class="fhead d-flex align-items-center m-0"><svg class="ic"><use href="#plan"/></svg>Project plandata</h1>
<div class="secs d-flex flex-grow-1 white">
<section class="sec-a d-flex flex-column">
<h2 class="stitle">Plandatas</h2>
<div class="d-flex flex-grow-1 ps-2 pe-2 ms-1 me-1 white"><div class="box flex-grow-1 white">
<ul class="tree single">
<li><div class="tn"><button class="tw" aria-label="Collapse"></button><svg class="ic"><use href="#over"/></svg>EnhancementProject</div>
<ul><li><div class="tn"><button class="tw" aria-label="Collapse"></button><svg class="ic"><use href="#planp"/></svg>Project plandatas</div>
<ul><li><div class="tn"><button class="tw plus" aria-label="Expand"></button><svg class="ic"><use href="#planok"/></svg>ProjectPlandata for RUP</div></li>
<li><div class="tn"><button class="tw" aria-label="Collapse"></button><svg class="ic"><use href="#plan"/></svg>ProjectPlandata for Waterfall</div>
<ul><li><div class="tn"><button class="tw" aria-label="Collapse"></button><svg class="ic"><use href="#fmp"/></svg>Counts</div>
<ul><li><div class="tn leaf"><svg class="ic"><use href="#fm"/></svg>ThirdEnhanProjCount</div></li><li><div class="tn leaf"><svg class="ic"><use href="#fm"/></svg>SecondEnhanProjCount</div></li><li><div class="tn leaf"><svg class="ic"><use href="#fm"/></svg>FirstEnhanProjCount</div></li></ul></li>
<li><div class="tn"><button class="tw" aria-label="Collapse"></button><svg class="ic"><use href="#estp"/></svg>Project estimations</div><ul><li><div class="tn leaf"><svg class="ic"><use href="#estok"/></svg>Project estimation</div></li></ul></li>
<li><div class="tn"><button class="tw" aria-label="Collapse"></button><svg class="ic"><use href="#bin"/></svg>Project actual data</div>
<ul><li><div class="tn"><button class="tw" aria-label="Collapse"></button><svg class="ic"><use href="#upd"/></svg>Plans and Requirements</div>
<ul><li><div class="tn leaf"><svg class="ic"><use href="#bug"/></svg>Defects</div></li><li><div class="tn leaf"><svg class="ic"><use href="#lines"/></svg>Requirements Analysis</div></li><li><div class="tn leaf"><svg class="ic"><use href="#lines"/></svg>Product Design</div></li><li><div class="tn leaf"><svg class="ic"><use href="#lines"/></svg>Programming</div></li><li><div class="tn leaf"><svg class="ic"><use href="#lines"/></svg>Test Planning</div></li><li><div class="tn leaf"><svg class="ic"><use href="#lines"/></svg>Verification and Validation</div></li><li><div class="tn leaf"><svg class="ic"><use href="#lines"/></svg>Project Office</div></li><li><div class="tn leaf"><svg class="ic"><use href="#lines"/></svg>CM / QA</div></li><li><div class="tn leaf"><svg class="ic"><use href="#lines"/></svg>Manuals</div></li></ul></li>
<li><div class="tn"><button class="tw" aria-label="Collapse"></button><svg class="ic"><use href="#upd"/></svg>Product Design</div><ul><li><div class="tn leaf"><svg class="ic"><use href="#bug"/></svg></div></li></ul></li><li></li></ul></li></ul></li><li></li></ul></li></ul></li>
</ul></div>
<div class="acts"><button class="xpbtn" disabled>Add</button><button class="xpbtn mb-3">Remove</button><button class="xpbtn">Set as default</button></div></div>
</section>
<section class="sec-b">
<h2 class="stitle">Details</h2>
<div class="frow d-flex align-items-center"><label for="nm">Name:</label><input id="nm" class="fld" value="unknown"></div>
<div class="frow d-flex align-items-center"><label for="bd">Begin date:</label><div class="fld d-flex align-items-center"><input id="bd" value="26.02.2010"><button aria-label="Pick begin date"><svg class="ic"><use href="#cal"/></svg></button></div></div>
<div class="frow d-flex align-items-center"><label for="ed">End date:</label><div class="fld d-flex align-items-center"><input id="ed" value="26.02.2010"><button aria-label="Pick end date"><svg class="ic"><use href="#cal"/></svg></button></div></div>
<div class="frow d-flex align-items-center"><label for="dp">Development process:</label><div class="fld d-flex align-items-center position-relative"><select id="dp"><option>MyRUP_II</option></select><span class="sb"><svg width="9" height="9"><use href="#cd"/></svg></span>
<div class="pop position-absolute d-flex"><ul class="flex-grow-1" role="listbox"><li role="option">Waterfall</li><li role="option">MyRUP</li><li class="sel" role="option" aria-selected="true">MyRUP_II</li><li role="option">MyWaterfall</li><li role="option">MyWaterFallNew</li></ul><div class="vbar"><button class="sb" aria-label="Scroll up"><svg width="9" height="9"><use href="#cu"/></svg></button><div class="thumb th-pop"><i></i></div><button class="sb mt-auto" aria-label="Scroll down"><svg width="9" height="9"><use href="#cd"/></svg></button></div></div></div></div>
</section>
</div>
</div>
<div class="vbar"><button class="sb" aria-label="Scroll up"><svg width="9" height="9"><use href="#cu"/></svg></button><div class="thumb th-ed"><i></i></div><button class="sb mt-auto" aria-label="Scroll down"><svg width="9" height="9"><use href="#cd"/></svg></button></div>
</div>
<div class="ptabs d-flex"><button>Overview</button><button class="cur">Plandata</button><button>Cocomo</button></div>
<svg class="ring position-absolute" viewBox="0 0 312 132"><ellipse cx="156" cy="66" rx="154" ry="63" fill="none" stroke="#f00" stroke-width="3"/></svg>
</div>
</section>
<section class="pane fixedpane logpane d-flex flex-column">
<ul class="tabs d-flex"><li><button><svg class="ic"><use href="#prop"/></svg>Properties</button></li><li class="div"><button><svg class="ic"><use href="#task"/></svg>Tasks</button></li><li class="on div"><button><svg class="ic"><use href="#err"/></svg>Error Log<svg class="ms-1" width="11" height="11"><use href="#x"/></svg></button></li><li class="curve"><svg width="34" height="22"><path d="M0 0C10 0 12 7 17 12S24 21.500 34 21.500V22H0z" fill="url(#gw)"/><path d="M0 .5C10 .5 12 7 17 12S24 21.500 34 21.500" fill="none" stroke="#aca899"/></svg></li>
<li class="ctl d-flex justify-content-end"><svg class="ic"><use href="#lg1"/></svg><svg class="ic"><use href="#lg2"/></svg><svg width="6" height="16"><use href="#dn"/></svg><i class="vsep"></i><svg class="ic"><use href="#lg3"/></svg><svg class="ic"><use href="#lg4"/></svg><svg class="ic"><use href="#lg5"/></svg><svg class="ic"><use href="#lg6"/></svg><i class="vsep"></i><svg class="ic"><use href="#lg7"/></svg><svg width="11" height="11"><use href="#vm"/></svg><svg width="11" height="11"><use href="#min"/></svg><svg width="11" height="11"><use href="#max"/></svg></li></ul>
<div class="wslog"><label for="flt">Workspace Log</label></div>
<input id="flt" class="fld filter" value="type filter text">
<div class="log white flex-grow-1">
<table class="logt"><colgroup><col class="w300"><col class="w150"><col class="w150"><col></colgroup><thead><tr><th>Message</th><th>Plug-in</th><th>Date <svg class="d-inline-block ms-1" width="10" height="6"><path d="M0 0h10L5 5z" fill="#aca899"/></svg></th><th></th></tr></thead><tbody><tr><td></td><td></td><td></td><td></td></tr><tr><td></td><td></td><td></td><td></td></tr><tr><td></td><td></td><td></td><td></td></tr><tr><td></td><td></td><td></td><td></td></tr><tr><td></td><td></td><td></td><td></td></tr></tbody></table>
</div>
</section>
</div>
</main>
<footer class="status d-flex align-items-center gap-2 flex-shrink-0"><i class="grip"></i><svg class="ic"><use href="#fast"/></svg><i class="grip far"></i></footer>
</div>
<script src="https://cdn.jsdelivr.net/npm/bootstrap@5.3.0/dist/js/bootstrap.bundle.min.js"></script>
</body>
</html>
